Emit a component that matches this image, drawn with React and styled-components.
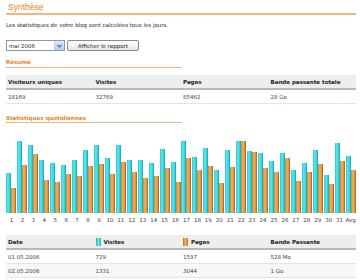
import styled, { createGlobalStyle } from "styled-components";

const GlobalStyle = createGlobalStyle`
  html, body {
    margin: 0;
    padding: 0;
    background: #ffffff;
  }
  body {
    font-family: "DejaVu Sans", Verdana, sans-serif;
    color: #2a2a2a;
  }
`;

const Page = styled.div`
  width: 350px;
  padding: 2px 4px 0 6px;
`;

const Title = styled.h1`
  margin: 0;
  padding: 0 0 1px 2px;
  font-family: "Liberation Sans", Arial, sans-serif;
  font-weight: normal;
  font-size: 8.5px;
  line-height: 10px;
  color: #ec7f22;
  border-bottom: 2px solid #f3b47f;
`;

const Intro = styled.p`
  margin: 7px 0 0;
  font-size: 5.5px;
  line-height: 7px;
`;

const FormRow = styled.div`
  display: flex;
  gap: 2px;
  margin-top: 11px;
  height: 11px;
`;

const Select = styled.div`
  width: 59px;
  box-sizing: border-box;
  display: flex;
  align-items: center;
  border: 1px solid #7f9db9;
  background: #fff;
  font-size: 5.5px;
  padding-left: 2px;
`;

const SelectValue = styled.span`
  flex: 1;
`;

const SelectArrow = styled.span`
  width: 9px;
  height: 9px;
  display: flex;
  align-items: center;
  justify-content: center;
  background: linear-gradient(#dce8fd, #b6cbf7);
  border-left: 1px solid #c3d3fd;
  svg {
    width: 5px;
    height: 4px;
  }
`;

const Button = styled.div`
  width: 72px;
  box-sizing: border-box;
  display: flex;
  align-items: center;
  justify-content: center;
  border: 1px solid #8a8a8a;
  border-radius: 2px;
  background: linear-gradient(#ffffff, #e6e6e0);
  font-size: 5.5px;
`;

const Section = styled.h2`
  margin: ${(p) => p.$top}px 0 0;
  width: 176px;
  padding-bottom: ${(p) => p.$pad}px;
  font-size: 5.5px;
  line-height: 6px;
  font-weight: bold;
  color: #ec7f22;
  border-bottom: 1px solid #f3b47f;
`;

const Table = styled.table`
  width: 350px;
  border-collapse: collapse;
  margin-top: ${(p) => p.$top}px;
  font-size: 5.5px;
  table-layout: fixed;
`;

const Th = styled.th`
  text-align: left;
  font-weight: bold;
  color: #222;
  background: #eeeeee;
  height: 13px;
  padding: 0 0 0 2px;
  border-bottom: 2px solid #b8b8b8;
`;

const Td = styled.td`
  height: 13px;
  padding: 0 0 0 2px;
  color: #444;
  border-bottom: 1px solid #e4e4e4;
  background: ${(p) => (p.$alt ? "#f7f7f7" : "#ffffff")};
`;

const Legend = styled.span`
  display: inline-block;
  width: 5px;
  height: 8px;
  margin-right: 3px;
  vertical-align: -2px;
  background: ${(p) => p.$color};
`;

const Chart = styled.div`
  display: flex;
  margin-top: 8px;
`;

const Group = styled.div`
  flex: 1;
  display: flex;
  flex-direction: column;
  align-items: center;
`;

const Bars = styled.div`
  height: 82px;
  display: flex;
  align-items: flex-end;
`;

const Bar = styled.div`
  width: 5px;
  background: ${(p) =>
    p.$kind === "v"
      ? "linear-gradient(90deg, #26c6cf, #5fe6ec 35%, #37d3da 70%, #1aa0aa)"
      : "linear-gradient(90deg, #c98232, #eeb260 35%, #dd9844 70%, #9e5d1c)"};
`;

const Label = styled.span`
  font-size: 5.5px;
  line-height: 6px;
  margin-top: 4px;
  color: #444;
`;

const CYAN = "linear-gradient(90deg, #1fb5c0, #66e8ee 50%, #1fb5c0)";
const ORANGE = "linear-gradient(90deg, #b87428, #f0b464 50%, #b87428)";

const days = [
  [40, 25], [72, 48], [68, 59], [53, 33], [50, 31], [48, 39], [53, 37], [63, 47],
  [68, 49], [55, 39], [68, 51], [53, 41], [53, 35], [50, 37], [64, 45], [51, 31],
  [72, 55], [56, 43], [65, 47], [43, 30], [63, 46], [72, 72], [62, 61], [60, 45],
  [52, 41], [60, 55], [43, 32], [50, 41], [63, 49], [38, 29], [70, 52], [57, 43],
];

function App() {
  return (
    <Page>
      <GlobalStyle />
      <Title>Synthèse</Title>
      <Intro>Les statistiques de votre blog sont calculées tous les jours.</Intro>
      <FormRow>
        <Select>
          <SelectValue>mai 2006</SelectValue>
          <SelectArrow>
            <svg viewBox="0 0 5 4">
              <path d="M0.5 0.8 L2.5 2.8 L4.5 0.8" fill="none" stroke="#4d6185" strokeWidth="1.2" />
            </svg>
          </SelectArrow>
        </Select>
        <Button>Afficher le rapport</Button>
      </FormRow>

      <Section $top={8} $pad={2}>Résumé</Section>
      <Table $top={7}>
        <thead>
          <tr>
            <Th>Visiteurs uniques</Th>
            <Th>Visites</Th>
            <Th>Pages</Th>
            <Th>Bande passante totale</Th>
          </tr>
        </thead>
        <tbody>
          <tr>
            <Td>18169</Td>
            <Td>32769</Td>
            <Td>85462</Td>
            <Td>28 Go</Td>
          </tr>
        </tbody>
      </Table>

      <Section $top={11} $pad={1}>Statistiques quotidiennes</Section>
      <Chart>
        {days.map(([v, p], i) => (
          <Group key={i}>
            <Bars>
              <Bar $kind="v" style={{ height: v }} />
              <Bar $kind="p" style={{ height: p }} />
            </Bars>
            <Label>{i < 31 ? i + 1 : "Avg"}</Label>
          </Group>
        ))}
      </Chart>

      <Table $top={12}>
        <thead>
          <tr>
            <Th>Date</Th>
            <Th>
              <Legend $color={CYAN} />
              Visites
            </Th>
            <Th>
              <Legend $color={ORANGE} />
              Pages
            </Th>
            <Th>Bande Passante</Th>
          </tr>
        </thead>
        <tbody>
          <tr>
            <Td>01.05.2006</Td>
            <Td>729</Td>
            <Td>1597</Td>
            <Td>528 Mo</Td>
          </tr>
          <tr>
            <Td $alt>02.05.2006</Td>
            <Td $alt>1331</Td>
            <Td $alt>3044</Td>
            <Td $alt>1 Go</Td>
          </tr>
        </tbody>
      </Table>
    </Page>
  );
}

export default App;
